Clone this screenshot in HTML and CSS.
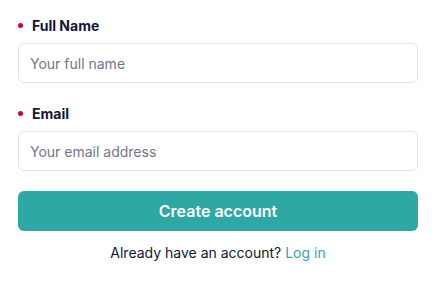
FILE: index.html
```html
<!DOCTYPE html>
<html lang="en">
<head>
    <meta charset="UTF-8">
    <meta name="viewport" content="width=device-width, initial-scale=1.0">
    <title>Create account</title>
    <link rel="stylesheet" href="styles.css">
</head>
<body>
    <form class="signup">
        <div class="form-group">
            <label for="fullName"><span class="required"></span>Full Name</label>
            <input type="text" id="fullName" placeholder="Your full name">
        </div>

        <div class="form-group">
            <label for="email"><span class="required"></span>Email</label>
            <input type="email" id="email" placeholder="Your email address">
        </div>

        <button type="submit" class="submit">Create account</button>

        <p class="login">Already have an account? <a href="#">Log in</a></p>
    </form>
</body>
</html>
```

FILE: styles.css
```css
body {
    margin: 0;
    padding: 15px 0 0 18px;
    font-family: Inter, "Noto Sans", sans-serif;
    background-color: #ffffff;
    color: #10163a;
}
.signup {
    width: 400px;
}
.form-group {
    margin-bottom: 20px;
}
label {
    display: flex;
    align-items: center;
    height: 20px;
    margin-bottom: 8px;
    font-size: 14px;
    font-weight: 700;
    color: #10163a;
}
.required {
    width: 5px;
    height: 5px;
    margin: 0 9px 0 0;
    border-radius: 50%;
    background-color: #d6002a;
}
input {
    display: block;
    width: 100%;
    height: 40px;
    padding: 0 11px;
    border: 1px solid #e1e3ea;
    border-radius: 6px;
    box-sizing: border-box;
    font-family: inherit;
    font-size: 14px;
    color: #10163a;
}
input::placeholder {
    color: #71768a;
}
.submit {
    display: block;
    width: 100%;
    height: 40px;
    border: none;
    border-radius: 6px;
    background-color: #2ea8a5;
    color: #ffffff;
    font-family: inherit;
    font-size: 16px;
    font-weight: 600;
    cursor: pointer;
}
.login {
    margin: 12px 0 0;
    line-height: 20px;
    text-align: center;
    font-size: 14px;
}
.login a {
    color: #36a5a5;
    text-decoration: none;
}
```
